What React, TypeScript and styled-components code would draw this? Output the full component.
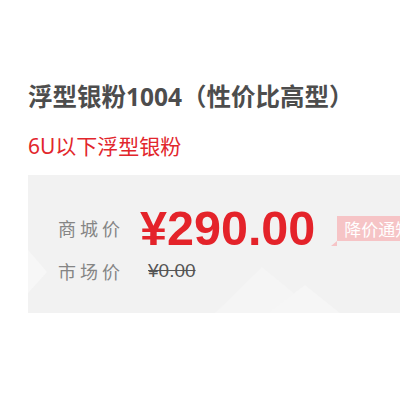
import React from "react";
import styled, { createGlobalStyle } from "styled-components";

const GlobalStyle = createGlobalStyle`
  html, body {
    margin: 0;
    padding: 0;
    background: #ffffff;
    overflow: hidden;
  }
  body {
    font-family: "Noto Sans", "Noto Sans CJK SC", sans-serif;
  }
`;

const Page = styled.div`
  display: flex;
  flex-direction: column;
  padding: 81px 0 0 28px;
  width: 400px;
  height: 400px;
  box-sizing: border-box;
  overflow: hidden;
`;

const Title = styled.h1`
  margin: 0;
  font-size: 24.5px;
  line-height: 32px;
  font-weight: 700;
  color: #4d4d4d;
  white-space: nowrap;
`;

const Subtitle = styled.div`
  margin-top: 19px;
  font-size: 21px;
  line-height: 28px;
  color: #e2262c;
  white-space: nowrap;
`;

const PricePanel = styled.div`
  position: relative;
  margin-top: 15px;
  height: 138px;
  padding: 29px 0 0 30px;
  box-sizing: border-box;
  background: #f2f2f2;
  overflow: hidden;
  display: flex;
  flex-direction: column;
  row-gap: 7px;
`;

const Decor = styled.svg`
  position: absolute;
  left: 0;
  top: 0;
  z-index: 0;
`;

const Row = styled.div`
  position: relative;
  z-index: 1;
  display: flex;
  align-items: center;
  white-space: nowrap;
`;

const Label = styled.span`
  flex-shrink: 0;
  font-family: "Noto Sans CJK SC", sans-serif;
  font-size: 18px;
  line-height: 24px;
  letter-spacing: 4px;
  color: #858585;
`;

const Price = styled.span`
  flex-shrink: 0;
  margin-left: 16px;
  font-family: "Liberation Sans", Arial, sans-serif;
  font-size: 48.5px;
  line-height: 48px;
  font-weight: 700;
  color: #e4232a;
`;

const OldPrice = styled.span`
  flex-shrink: 0;
  margin-left: 24px;
  font-family: "Liberation Sans", Arial, sans-serif;
  font-size: 19px;
  line-height: 24px;
  color: #555;
  text-decoration: line-through;
`;

const Badge = styled.span`
  position: relative;
  flex-shrink: 0;
  margin-left: 22px;
  height: 25px;
  padding: 0 7px;
  background: #f6c4c6;
  color: #ffffff;
  font-family: "Noto Sans CJK SC", sans-serif;
  font-size: 17px;
  line-height: 25px;
  &::before {
    content: "";
    position: absolute;
    left: -6px;
    bottom: -5px;
    border-top: 5px solid transparent;
    border-right: 6px solid #f6c4c6;
  }
`;

export default function App() {
  return (
    <Page>
      <GlobalStyle />
      <Title>浮型银粉1004（性价比高型）</Title>
      <Subtitle>6U以下浮型银粉</Subtitle>
      <PricePanel>
        <Decor width="372" height="138" viewBox="0 0 372 138">
          <polygon points="0,75 19,97 0,118" fill="#f7f7f7" />
          <polygon points="187,138 234,92 290,138" fill="#f5f5f5" />
          <polygon points="240,138 277,110 312,138" fill="#f6f6f6" />
        </Decor>
        <Row>
          <Label>商城价</Label>
          <Price>¥290.00</Price>
          <Badge>降价通知</Badge>
        </Row>
        <Row>
          <Label>市场价</Label>
          <OldPrice>¥0.00</OldPrice>
        </Row>
      </PricePanel>
    </Page>
  );
}
